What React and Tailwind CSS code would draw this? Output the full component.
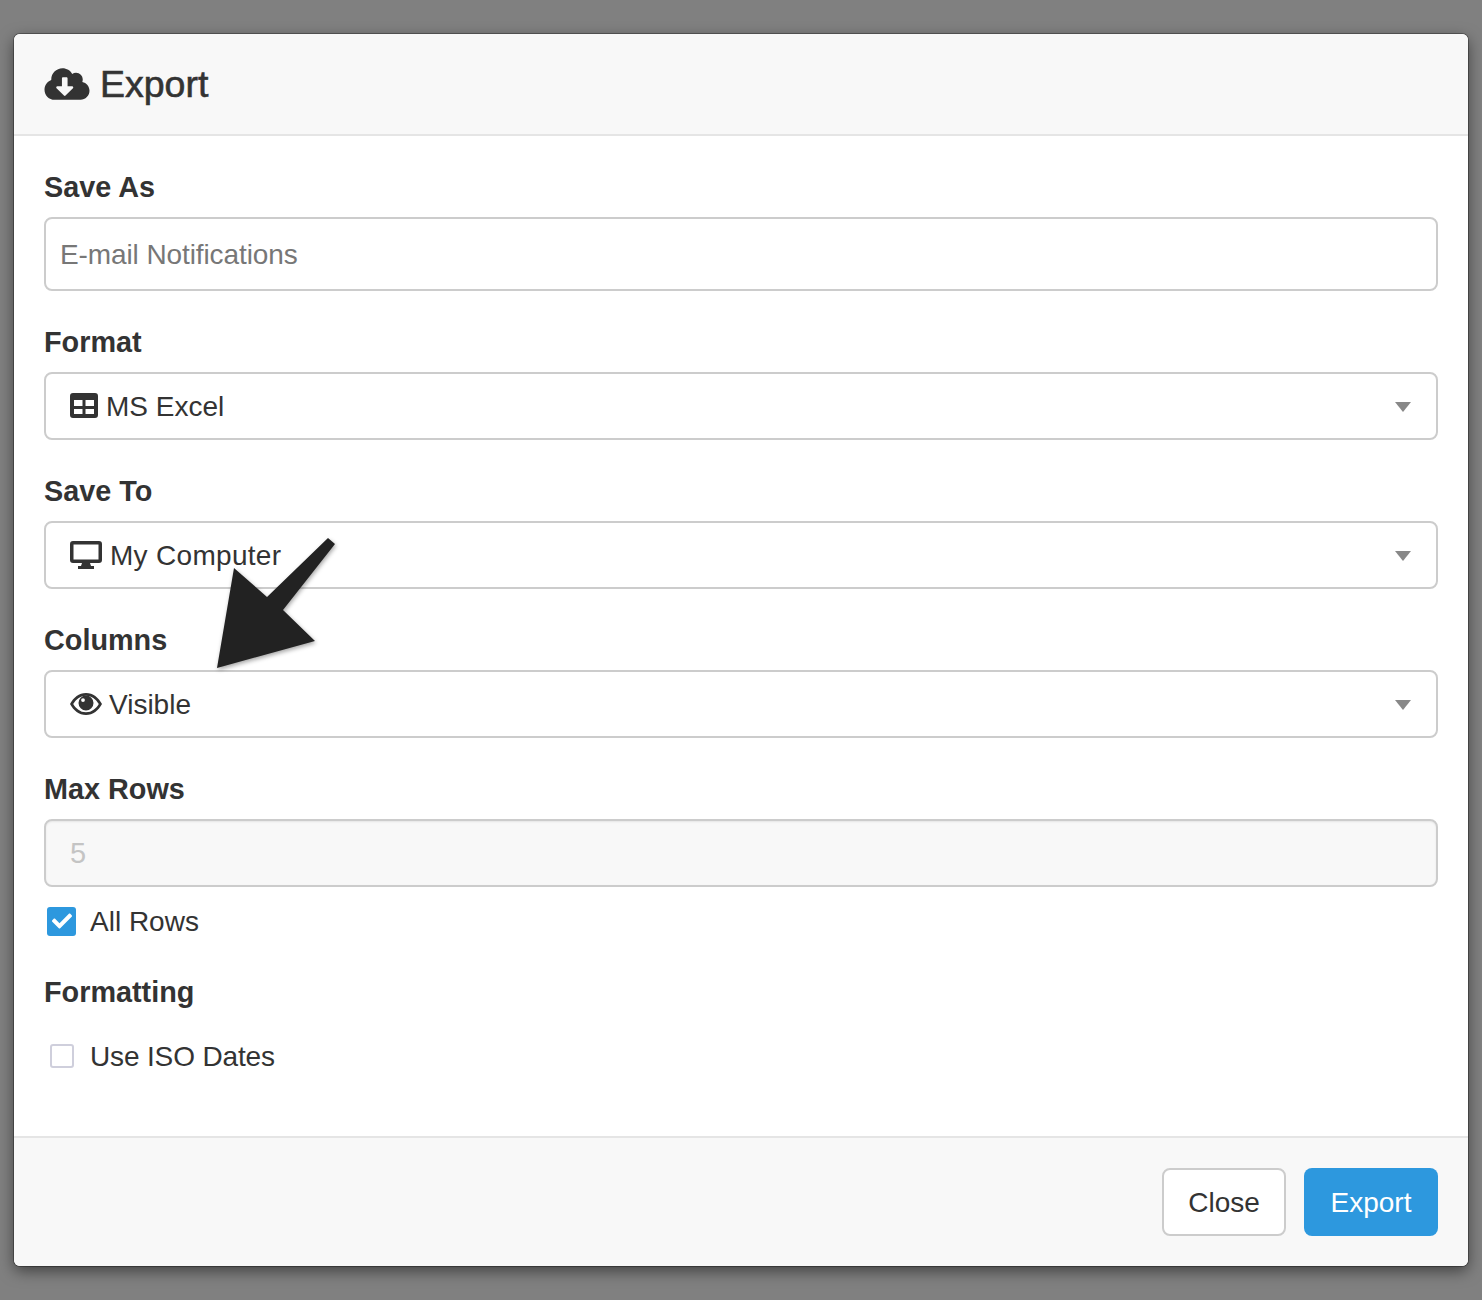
import { FaCloudDownloadAlt, FaCheck } from 'react-icons/fa';

function TableIcon() {
  return (
    <svg viewBox="0 0 28 25" className="-mt-[2px] h-[25px] w-[28px]" fill="#333">
      <path fillRule="evenodd" d="M3 0h22a3 3 0 0 1 3 3v19a3 3 0 0 1-3 3H3a3 3 0 0 1-3-3V3a3 3 0 0 1 3-3zm1 7v6h8.500V7zm11.500 0v6H24V7zM4 16v5h8.500v-5zm11.500 0v5H24v-5z" />
    </svg>
  );
}

function DesktopIcon() {
  return (
    <svg viewBox="0 0 32 28" className="h-[28px] w-[32px]" fill="#333">
      <path fillRule="evenodd" d="M3 0h26a3 3 0 0 1 3 3v16a3 3 0 0 1-3 3H20l1 3h3v3H8v-3h3l1-3H3a3 3 0 0 1-3-3V3a3 3 0 0 1 3-3zm.500 3.500v15h25v-15z" />
    </svg>
  );
}

function EyeIcon() {
  return (
    <svg viewBox="0 0 32 22" className="h-[22px] w-[32px]" fill="#333">
      <path fillRule="evenodd" d="M16 0C9 0 3.500 4.500 0 11c3.500 6.500 9 11 16 11s12.500-4.500 16-11C28.500 4.500 23 0 16 0zm0 2.700C10 2.700 6 6.500 3.200 11 6 15.500 10 19.300 16 19.300S26 15.500 28.800 11C26 6.500 22 2.700 16 2.700z" />
      <path fillRule="evenodd" d="M16 2.500a7.500 7.500 0 1 0 0 15 7.500 7.500 0 0 0 0-15zm-3 2.700a1.900 1.900 0 1 1 0 3.800 1.900 1.900 0 0 1 0-3.800z" />
    </svg>
  );
}

function Caret() {
  return <span className="mt-[2px] ml-auto h-0 w-0 border-x-[8px] border-t-[10px] border-x-transparent border-t-[#888]" />;
}

function Field({ label, className, children }) {
  return (
    <div className={className}>
      <label className="mb-[14px] block h-[32px] text-[28.8px] leading-[32px] font-bold text-[#333]">{label}</label>
      {children}
    </div>
  );
}

function SelectBox({ icon, text, textClass }) {
  return (
    <div className="flex h-[68px] items-center rounded-lg border-2 border-[#ccc] bg-white pr-[25px] pl-[24px] text-[#333]">
      {icon}
      <span className={`pt-[2px] text-[28px] ${textClass}`}>{text}</span>
      <Caret />
    </div>
  );
}

export default function App() {
  return (
    <div className="relative h-[1300px] overflow-hidden bg-[#808080] px-[14px] pt-[34px] font-['Liberation_Sans',Arial,sans-serif]">
      <div className="flex h-[1232px] w-[1454px] flex-col overflow-hidden rounded-md bg-white shadow-[0_0_0_1px_rgba(0,0,0,0.3),0_5px_15px_rgba(0,0,0,0.5)]">
        <div className="flex h-[102px] shrink-0 items-center border-b-2 border-[#e5e5e5] bg-[#f8f8f8] px-[30px] text-[#333]">
          <FaCloudDownloadAlt className="mr-[10px] h-[36px] w-[46px]" />
          <h4 className="pt-[2px] text-[37.500px] leading-none [-webkit-text-stroke:0.6px_#333]">Export</h4>
        </div>
        <div className="flex-1 px-[30px] pt-[36px]">
          <Field label="Save As" className="-mt-px">
            <input
              placeholder="E-mail Notifications"
              className="block h-[74px] w-full rounded-lg border-2 border-[#ccc] bg-white px-[14px] pt-[2px] text-[28px] tracking-[-0.1px] text-[#333] outline-none placeholder:text-[#777]"
            />
          </Field>
          <Field label="Format" className="mt-[35px]">
            <SelectBox icon={<TableIcon />} text="MS Excel" textClass="ml-[8px]" />
          </Field>
          <Field label="Save To" className="mt-[35px]">
            <SelectBox icon={<DesktopIcon />} text="My Computer" textClass="ml-[8px] tracking-[0.3px]" />
          </Field>
          <Field label="Columns" className="mt-[35px]">
            <SelectBox icon={<EyeIcon />} text="Visible" textClass="ml-[7px]" />
          </Field>
          <Field label="Max Rows" className="mt-[35px]">
            <div className="flex h-[68px] items-center rounded-lg border-2 border-[#ccc] bg-[#f8f8f8] px-[24px] pt-[2px] text-[29px] text-[#c4c4c4] shadow-[inset_0_1px_2px_rgba(0,0,0,0.08)]">5</div>
          </Field>
          <div className="mt-[18px] flex h-[32px] items-center pl-[3px]">
            <span className="flex h-[29px] w-[29px] items-center justify-center rounded-[3px] bg-[#2d98de]">
              <FaCheck className="h-[20px] w-[20px] text-white" />
            </span>
            <span className="ml-[14px] pt-[2px] text-[28px] text-[#333]">All Rows</span>
          </div>
          <div className="mt-[39px]">
            <label className="mb-[32px] block h-[32px] text-[28.8px] leading-[32px] font-bold text-[#333]">Formatting</label>
            <div className="flex h-[32px] items-center pl-[6px]">
              <span className="h-[24px] w-[24px] rounded-[3px] border-2 border-[#cfcfdc] bg-white" />
              <span className="ml-[16px] pt-[2px] text-[28px] tracking-[-0.15px] text-[#333]">Use ISO Dates</span>
            </div>
          </div>
        </div>
        <div className="flex h-[130px] shrink-0 items-center justify-end gap-[18px] border-t-2 border-[#e5e5e5] bg-[#f8f8f8] px-[30px]">
          <button className="h-[68px] w-[124px] rounded-lg border-2 border-[#ccc] bg-white pt-[2px] text-[28px] text-[#333]">Close</button>
          <button className="h-[68px] w-[134px] rounded-lg bg-[#2d98de] pt-[2px] text-[28px] text-white">Export</button>
        </div>
      </div>
      {/* annotation arrow drawn over the dialog */}
      <svg className="absolute top-0 left-0 h-[1300px] w-[1482px] drop-shadow-[1px_2px_2px_rgba(0,0,0,0.35)]" viewBox="0 0 1482 1300">
        <polygon points="328,538 335,544 283,610 315,641 217,668 234,568 267,597" fill="#222" />
      </svg>
    </div>
  );
}
